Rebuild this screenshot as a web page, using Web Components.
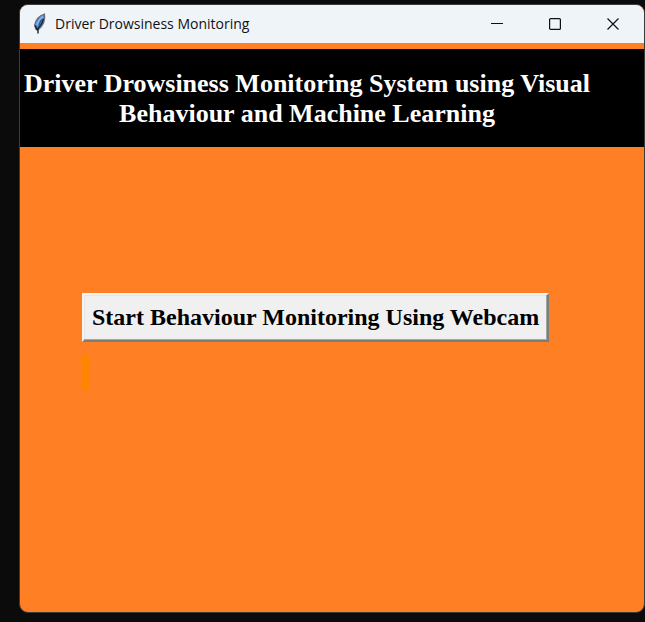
<!DOCTYPE html>
<html lang="en">
<head>
<meta charset="utf-8">
<title>Driver Drowsiness Monitoring</title>
<style>
  html, body { height: 100%; margin: 0; }
  body { background: #0b0b0b; }
</style>
</head>
<body>
<desktop-window>
  <window-titlebar slot="titlebar">Driver Drowsiness Monitoring</window-titlebar>
  <app-banner>Driver Drowsiness Monitoring System using Visual
Behaviour and Machine Learning</app-banner>
  <action-panel>
    <raised-button>Start Behaviour Monitoring Using Webcam</raised-button>
    <status-label></status-label>
  </action-panel>
</desktop-window>
<script>
  const define = (name, markup) => customElements.define(name, class extends HTMLElement {
    constructor() {
      super();
      this.attachShadow({ mode: "open" }).innerHTML = markup;
    }
  });

  define("desktop-window", `
    <style>
      :host { display: flex; box-sizing: border-box; height: 100vh; padding: 4px 0 9px 19px; }
      .frame {
        flex: 1; min-width: 0; display: flex; flex-direction: column; overflow: hidden;
        border: 1px solid #3b3b3b; border-radius: 9px; background: #ff8024;
      }
      main { flex: 1; padding-top: 6px; }
    </style>
    <div class="frame">
      <slot name="titlebar"></slot>
      <main><slot></slot></main>
    </div>`);

  define("window-titlebar", `
    <style>
      :host {
        display: flex; align-items: center; height: 38px; padding: 0 2px 0 12px;
        background: #eff4f9; color: #111; font: 14px/20px "Open Sans", "Noto Sans", sans-serif;
      }
      .title { flex: 1; min-width: 0; padding-left: 7px; white-space: nowrap; }
      .feather { flex: none; }
      .controls { display: flex; height: 100%; }
      button {
        display: grid; place-items: center; width: 58px; padding: 0; border: 0;
        background: none; color: #111;
      }
      button svg { display: block; fill: none; stroke: currentColor; }
    </style>
    <svg class="feather" width="16" height="22" viewBox="0 0 16 22" aria-hidden="true">
      <path d="M12.500 1C7.500 2.500 3.500 7 2.500 12.500L4 16.500 6.500 16.500C10.500 13 13.500 7 12.500 1Z" fill="#4a86cc" stroke="#666c74" stroke-width="1.200"/>
      <path d="M11 3.500C7.500 6 5.500 9 4.800 12.500" fill="none" stroke="#86b5ea" stroke-width="1.600"/>
      <path d="M11.500 6C10.500 10 8.500 13 6 15.500L6 20.500M3.200 12.500L5.500 17.500" fill="none" stroke="#1b2430" stroke-width="1.400"/>
      <path d="M9.500 6.500L7 12" fill="none" stroke="#234f86" stroke-width="1"/>
    </svg>
    <span class="title"><slot></slot></span>
    <div class="controls">
      <button aria-label="Minimize"><svg width="12" height="12"><path d="M0 5.500H12"/></svg></button>
      <button aria-label="Maximize"><svg width="12" height="12"><rect x=".6" y=".6" width="10.800" height="10.800" rx="1" stroke-width="1.200"/></svg></button>
      <button aria-label="Close"><svg width="12" height="12"><path d="M.5.500 11.500 11.500M11.500.500.500 11.500" stroke-width="1.200"/></svg></button>
    </div>`);

  define("app-banner", `
    <style>
      :host { display: flex; padding: 20px 4px 18px; background: #000; color: #fff; }
      h1 {
        margin: 0; text-align: center; white-space: pre;
        font: bold 26px/30px "Liberation Serif", "Times New Roman", serif;
      }
    </style>
    <h1><slot></slot></h1>`);

  define("action-panel", `
    <style>
      :host {
        display: flex; flex-direction: column; align-items: flex-start; gap: 13px;
        padding: 146px 62px 0;
      }
    </style>
    <slot></slot>`);

  define("raised-button", `
    <style>
      :host { display: block; }
      button {
        display: block; padding: 8px; white-space: nowrap; color: #000; background: #f0f0f0;
        border: 2px solid; border-color: #f7f4f1 #7d7d7d #7d7d7d #f7f4f1;
        box-shadow: inset -1px -1px #a5a5a5, inset 1px 1px #e6e6e6;
        font: bold 24px/29px "Liberation Serif", "Times New Roman", serif;
      }
    </style>
    <button type="button"><slot></slot></button>`);

  define("status-label", `
    <style>
      :host { display: block; width: 8px; height: 35px; background: #ff8400; }
    </style>
    <slot></slot>`);
</script>
</body>
</html>
